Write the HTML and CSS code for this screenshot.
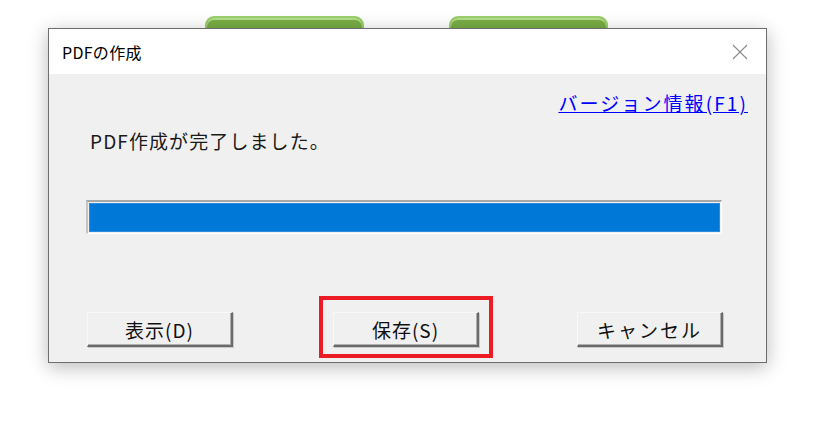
FILE: index.html
```html
<!DOCTYPE html>
<html lang="ja">
  <head>
    <meta charset="UTF-8" />
    <title>PDFの作成</title>
    <link rel="stylesheet" href="styles.css">
  </head>
  <body>
    <div class="backdrop">
      <div class="green-btn first"></div>
      <div class="green-btn second"></div>
    </div>

    <div class="dialog">
      <div class="titlebar">
        <span class="title">PDFの作成</span>
        <svg class="close" width="16" height="16" viewBox="0 0 16 16">
          <path d="M1 1 L15 15 M15 1 L1 15" stroke="#8a8a8a" stroke-width="1.1" fill="none" />
        </svg>
      </div>

      <div class="body">
        <div class="link-row">
          <a class="version" href="#">バージョン情報(F1)</a>
        </div>
        <p class="message">PDF作成が完了しました。</p>
        <div class="progress">
          <div class="progress-fill" style="width: 100%"></div>
        </div>
        <div class="buttons">
          <button class="btn show">表示(D)</button>
          <span class="highlight">
            <button class="btn">保存(S)</button>
          </span>
          <button class="btn cancel">キャンセル</button>
        </div>
      </div>
    </div>
  </body>
</html>
```

FILE: styles.css
```css
* {
  margin: 0;
  padding: 0;
  box-sizing: border-box;
}

body {
  width: 832px;
  height: 434px;
  background-color: #ffffff;
  font-family: "Noto Sans CJK JP", sans-serif;
  overflow: hidden;
}

.backdrop {
  display: flex;
  height: 28px;
  padding-top: 16px;
  overflow: hidden;
}

.green-btn {
  width: 159px;
  height: 40px;
  background-color: #79ad44;
  border: 2px solid #9ccf6c;
  border-radius: 9px;
  box-shadow: inset 0 2px 0 #b4de8a;
}

.green-btn.first {
  margin-left: 205px;
}

.green-btn.second {
  margin-left: 85px;
}

.dialog {
  width: 719px;
  margin-left: 48px;
  border: 1px solid #6e6e6e;
  background-color: #f0f0f0;
  box-shadow: 0 4px 18px rgba(0, 0, 0, 0.28);
  position: relative;
}

.titlebar {
  height: 45px;
  background-color: #ffffff;
  display: flex;
  align-items: center;
  justify-content: space-between;
  padding: 0 18px 0 13px;
}

.title {
  font-size: 16px;
  color: #000;
  letter-spacing: 0.3px;
}

.close {
  margin-top: 1px;
}

.body {
  height: 288px;
  padding-top: 17px;
}

.link-row {
  display: flex;
  justify-content: flex-end;
  padding-right: 18px;
  height: 24px;
}

.version {
  font-size: 19px;
  line-height: 24px;
  color: #0000ff;
  text-decoration: underline;
  letter-spacing: 2.1px;
}

.message {
  margin: 13px 0 0 41px;
  font-size: 19px;
  line-height: 26px;
  color: #1a1a1a;
  letter-spacing: 1.1px;
}

.progress {
  width: 636px;
  height: 34px;
  margin: 46px 0 0 37px;
  border-style: solid;
  border-width: 2px 1px 1px 2px;
  border-color: #a8a8a8 #ffffff #ffffff #c4c4c4;
  padding: 1px;
}

.progress-fill {
  height: 100%;
  background-color: #0078d7;
  border: 1px solid #2a8ce0;
}

.buttons {
  display: flex;
  align-items: flex-start;
  margin-top: 62px;
  padding-left: 38px;
}

.btn {
  width: 146px;
  height: 35px;
  margin-top: 16px;
  font-family: "Noto Sans CJK JP", sans-serif;
  font-size: 19px;
  color: #111;
  background-color: #f0f0f0;
  border-style: solid;
  border-width: 1px 2px 2px 1px;
  border-color: #f8f8f8 #6a6a6a #6a6a6a #f8f8f8;
  box-shadow: inset -1px -1px 0 #b0b0b0, 1px 1px 0 #c8c8c8;
  letter-spacing: 1px;
}

.highlight {
  display: flex;
  margin-left: 86px;
  padding: 12px 10px 7px 10px;
  border: 4px solid #ec1c24;
}

.highlight .btn {
  margin-top: 0;
}

.cancel {
  margin-left: 84px;
  letter-spacing: 2px;
}
```
